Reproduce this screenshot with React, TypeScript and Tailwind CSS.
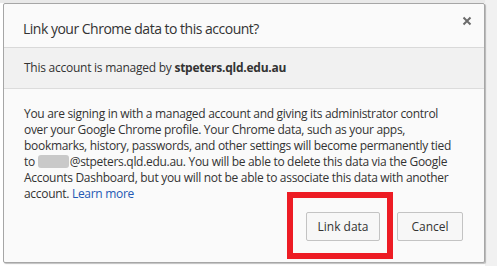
import React from "react";

export default function App() {
  const font = { fontFamily: '"Segoe UI", "Open Sans", "Noto Sans", sans-serif' };
  return (
    <div className="relative w-[497px] h-[272px] bg-white overflow-hidden" style={font}>
      <div className="absolute left-0 top-0 w-[497px] h-[3px] bg-[#e9e9e9]" />
      <div className="absolute right-0 top-0 w-[12px] h-[266px] bg-[#f1f1f1]" />
      <div className="relative ml-[3px] mt-[3px] w-[482px] h-[260px] bg-[#fafafa] border border-[#a6a6a6] rounded-[2px] shadow-[1px_1px_1px_rgba(0,0,0,0.25)] flex flex-col">
        <div className="h-[44px] flex items-center pl-[19px] pr-[12px] justify-between border-b border-[#d9d9d9]">
          <div className="text-[14px] text-[#333] tracking-[-0.5px] leading-none pt-[6px]">
            Link your Chrome data to this account?
          </div>
          <svg width="10" height="10" viewBox="0 0 10 10" className="mb-[10px]">
            <path d="M1.5 1.5 L8.5 8.5 M8.5 1.5 L1.5 8.5" stroke="#6b6b6b" strokeWidth="2" />
          </svg>
        </div>
        <div className="h-[41px] bg-[#f1f1f1] border-b border-[#dcdcdc] flex items-center pl-[20px] text-[12px] text-[#333] tracking-[-0.25px]">
          This account is managed by&nbsp;<span className="font-bold">stpeters.qld.edu.au</span>
        </div>
        <div className="pl-[20px] pr-[16px] pt-[17px] text-[12px] leading-[16px] text-[#333] tracking-[-0.3px] whitespace-nowrap">
          You are signing in with a managed account and giving its administrator control
          <br />
          over your Google Chrome profile. Your Chrome data, such as your apps,
          <br />
          bookmarks, history, passwords, and other settings will become permanently tied
          <br />
          to <span className="inline-block w-[31px] h-[13px] align-[-2px] bg-[#c9c9c9] rounded-[3px] mr-[1px]" />@stpeters.qld.edu.au. You will be able to delete this data via the Google
          <br />
          Accounts Dashboard, but you will not be able to associate this data with another
          <br />
          account. <span className="text-[#2358b3]">Learn more</span>
        </div>
        <div className="flex justify-end gap-[17px] pr-[21px] mt-[10px]">
          <button className="w-[74px] h-[29px] border border-[#c3c3c3] rounded-[2px] bg-[#f7f7f7] text-[12px] text-[#333]">
            Link data
          </button>
          <button className="w-[66px] h-[29px] border border-[#c3c3c3] rounded-[2px] bg-[#f7f7f7] text-[12px] text-[#333]">
            Cancel
          </button>
        </div>
      </div>
      <div className="absolute left-[287px] top-[192px] w-[106px] h-[67px] border-[6px] border-[#ed1c24]" />
    </div>
  );
}
